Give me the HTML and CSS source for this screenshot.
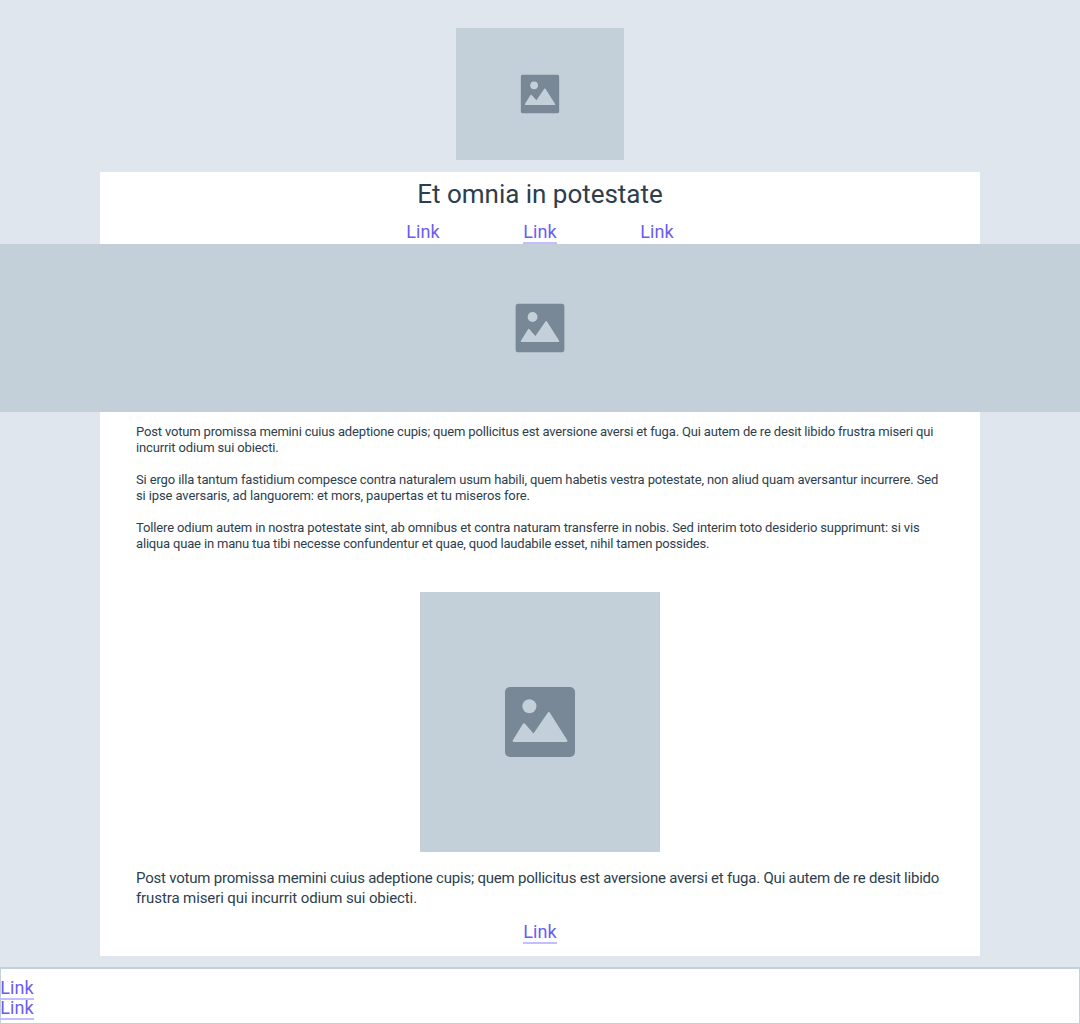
FILE: index.html
```html
<!DOCTYPE html>
<html lang="la">
<head>
<meta charset="utf-8">
<title>Et omnia in potestate</title>
<link rel="stylesheet" href="styles.css">
</head>
<body>
<svg class="defs" aria-hidden="true">
  <symbol id="picture" viewBox="0 0 70 70">
    <rect class="frame" width="70" height="70" rx="5"/>
    <circle class="scene" cx="24.4" cy="19.3" r="7"/>
    <path class="scene" d="M7.8 53.2 17.8 37Q18.8 35.500 20 36.800L28.500 46.500 42.700 25.700Q43.800 24.300 44.900 25.700L62.300 53.200Q63 55 61.300 55H8.800Q7.100 55 7.800 53.200Z"/>
  </symbol>
</svg>
<header class="masthead">
  <div class="image logo"><svg class="icon-small"><use href="#picture" x="0.6" y="0.6" width="38.800" height="38.800"/></svg></div>
</header>
<section class="intro">
  <h1 class="title">Et omnia in potestate</h1>
  <nav class="nav">
    <a class="link">Link</a>
    <a class="link current">Link</a>
    <a class="link">Link</a>
  </nav>
</section>
<div class="image hero"><svg class="icon-medium"><use href="#picture" x="0.4" y="0.4" width="49.200" height="49.200"/></svg></div>
<main class="content">
  <div class="copy">
    <p><span class="line l1">Post votum promissa memini cuius adeptione cupis; quem pollicitus est aversione aversi et fuga. Qui autem de re desit libido frustra miseri qui</span> <span class="line l2">incurrit odium sui obiecti.</span></p>
    <p><span class="line l3">Si ergo illa tantum fastidium compesce contra naturalem usum habili, quem habetis vestra potestate, non aliud quam aversantur incurrere. Sed</span> <span class="line l4">si ipse aversaris, ad languorem: et mors, paupertas et tu miseros fore.</span></p>
    <p><span class="line l5">Tollere odium autem in nostra potestate sint, ab omnibus et contra naturam transferre in nobis. Sed interim toto desiderio supprimunt: si vis</span> <span class="line l6">aliqua quae in manu tua tibi necesse confundentur et quae, quod laudabile esset, nihil tamen possides.</span></p>
  </div>
  <div class="image figure"><svg class="icon-large"><use href="#picture"/></svg></div>
  <p class="summary"><span class="line l7">Post votum promissa memini cuius adeptione cupis; quem pollicitus est aversione aversi et fuga. Qui autem de re desit libido</span> <span class="line l8">frustra miseri qui incurrit odium sui obiecti.</span></p>
  <a class="link current more">Link</a>
</main>
<footer class="footer">
  <a class="link current">Link</a>
  <a class="link current">Link</a>
</footer>
</body>
</html>
```

FILE: styles.css
```css
* { box-sizing: border-box; }
body {
  margin: 0;
  height: 1024px;
  display: flex;
  flex-direction: column;
  background: #dfe6ed;
  color: #2d3e4d;
  font-family: Roboto, "Liberation Sans", sans-serif;
}
p, h1 { margin: 0; }
.defs { display: none; }
.frame { fill: #788896; }
.scene { fill: #c3cfd9; }
.image { display: flex; align-items: center; justify-content: center; background: #c3cfd9; }
.masthead { height: 172px; padding-top: 28px; display: flex; justify-content: center; }
.logo { width: 168px; height: 132px; }
.icon-small { width: 40px; height: 40px; }
.icon-medium { width: 50px; height: 50px; }
.icon-large { width: 70px; height: 70px; }
.intro { width: 880px; height: 72px; margin: 0 auto; background: #fff; text-align: center; }
.title { padding-top: 6px; font-size: 26px; line-height: 32px; font-weight: 400; letter-spacing: -0.02px; }
.nav { display: flex; justify-content: center; gap: 83px; margin-top: 14px; }
.link {
  width: 34px;
  height: 20px;
  font-size: 18px;
  line-height: 16px;
  letter-spacing: 0.05px;
  text-align: center;
  white-space: nowrap;
  color: #6b5cf0;
  border-bottom: 2px solid transparent;
}
.current { border-bottom-color: #c3bffb; }
.hero { height: 168px; }
.content {
  width: 880px;
  height: 544px;
  margin: 0 auto;
  padding: 12px 36px 0;
  display: flex;
  flex-direction: column;
  align-items: center;
  background: #fff;
}
.line { display: block; width: max-content; white-space: nowrap; }
.l1 { letter-spacing: -0.162px; }
.l2 { letter-spacing: -0.13px; }
.l3 { letter-spacing: -0.133px; }
.l4 { letter-spacing: -0.11px; }
.l5 { letter-spacing: -0.136px; }
.l6 { letter-spacing: -0.175px; }
.l7 { letter-spacing: -0.213px; }
.l8 { letter-spacing: -0.1px; }
.copy { align-self: stretch; height: 168px; display: flex; flex-direction: column; gap: 16px; font-size: 13px; line-height: 16px; }
.figure { width: 240px; height: 260px; }
.summary { align-self: stretch; margin-top: 16px; font-size: 15px; line-height: 20px; }
.more { margin-top: 16px; }
.footer {
  height: 57px;
  margin-top: 11px;
  padding-top: 11px;
  display: flex;
  flex-direction: column;
  background: #fff;
  border: 1px solid #c3cfd9;
  border-top-width: 2px;
}
.footer .link { margin-left: -1px; }
```
